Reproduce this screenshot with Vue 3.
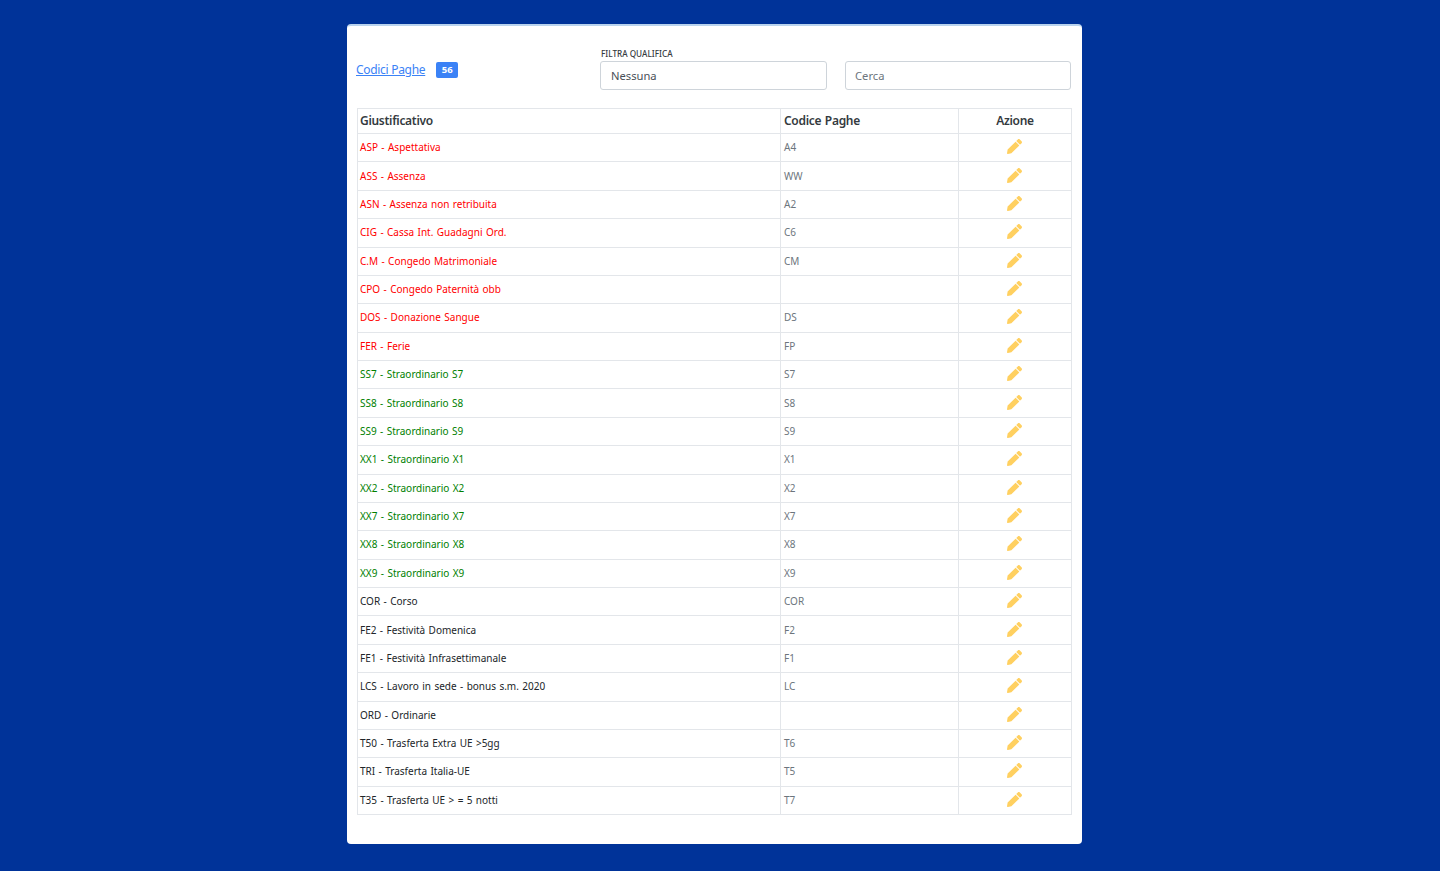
<script setup>
const groups = [
  ['red', [['ASP - Aspettativa','A4'],['ASS - Assenza','WW'],['ASN - Assenza non retribuita','A2'],['CIG - Cassa Int. Guadagni Ord.','C6'],['C.M - Congedo Matrimoniale','CM'],['CPO - Congedo Paternità obb',''],['DOS - Donazione Sangue','DS'],['FER - Ferie','FP']]],
  ['green', [['SS7 - Straordinario S7','S7'],['SS8 - Straordinario S8','S8'],['SS9 - Straordinario S9','S9'],['XX1 - Straordinario X1','X1'],['XX2 - Straordinario X2','X2'],['XX7 - Straordinario X7','X7'],['XX8 - Straordinario X8','X8'],['XX9 - Straordinario X9','X9']]],
  ['dark', [['COR - Corso','COR'],['FE2 - Festività Domenica','F2'],['FE1 - Festività Infrasettimanale','F1'],['LCS - Lavoro in sede - bonus s.m. 2020','LC'],['ORD - Ordinarie',''],['T50 - Trasferta Extra UE >5gg','T6'],['TRI - Trasferta Italia-UE','T5'],['T35 - Trasferta UE > = 5 notti','T7']]],
]
const rows = groups.flatMap(([cls, items]) => items.map(([name, code]) => ({ cls, name, code })))
</script>

<template>
  <div class="page">
    <main class="card">
      <header class="top">
        <div class="title">
          <a href="#" class="link">Codici Paghe</a>
          <span class="badge">56</span>
        </div>
        <label class="filter">
          <span class="lab">FILTRA QUALIFICA</span>
          <span class="control">Nessuna</span>
        </label>
        <div class="search"><span class="control ph">Cerca</span></div>
      </header>
      <table class="tbl">
        <colgroup><col class="c1" /><col class="c2" /><col class="c3" /></colgroup>
        <thead>
          <tr><th>Giustificativo</th><th>Codice Paghe</th><th class="center">Azione</th></tr>
        </thead>
        <tbody>
          <tr v-for="r in rows" :key="r.name">
            <td :class="r.cls">{{ r.name }}</td>
            <td class="code">{{ r.code }}</td>
            <td class="center action">
              <svg class="pen" viewBox="0 0 512 512" aria-hidden="true">
                <path d="M497.9 142.1l-46.1 46.1c-4.700 4.700-12.300 4.700-17 0l-111-111c-4.700-4.700-4.700-12.300 0-17l46.100-46.100c18.700-18.700 49.100-18.700 67.900 0l60.100 60.100c18.800 18.700 18.800 49.100 0 67.900zM284.200 99.800L21.600 362.400.4 483.900c-2.900 16.400 11.400 30.600 27.800 27.800l121.500-21.300 262.600-262.600c4.700-4.700 4.700-12.300 0-17l-111-111c-4.800-4.700-12.400-4.700-17.100 0z" />
              </svg>
            </td>
          </tr>
        </tbody>
      </table>
    </main>
  </div>
</template>

<style scoped>
.page {
  min-height: 871px;
  box-sizing: border-box;
  padding-top: 24px;
  background: #003399;
  font-family: "Noto Sans", "Open Sans", sans-serif;
}
.card {
  box-sizing: border-box;
  width: 735px;
  height: 820px;
  margin-left: 347px;
  padding: 0 10px 0 9px;
  background: #fff;
  border-top: 2px solid #b9d3ee;
  border-radius: 4px;
}
.top {
  display: grid;
  grid-template-columns: 244px 227px 244px;
  height: 82px;
  align-items: start;
}
.title {
  display: flex;
  align-items: center;
  gap: 11px;
  margin-top: 35px;
  height: 17px;
}
.link {
  color: #3b82f6;
  font-size: 12px;
  letter-spacing: -0.300px;
  text-decoration: underline;
}
.badge {
  box-sizing: border-box;
  width: 22px;
  height: 16px;
  border-radius: 2px;
  background: #3b82f6;
  color: #fff;
  font-size: 9.500px;
  font-weight: 700;
  line-height: 16px;
  text-align: center;
}
.filter { display: block; margin-top: 21px; }
.lab {
  display: block;
  height: 14px;
  padding-left: 1px;
  color: #343a40;
  font-size: 8.200px;
  font-weight: 500;
  line-height: 14px;
}
.control {
  display: block;
  box-sizing: border-box;
  height: 29px;
  padding-left: 10px;
  border: 1px solid #ced4da;
  border-radius: 3px;
  color: #495057;
  font-size: 11.200px;
  line-height: 27px;
}
.search { margin-top: 35px; padding-left: 18px; }
.ph { padding-left: 9px; color: #6c757d; line-height: 28px; }
.tbl {
  width: 714px;
  table-layout: fixed;
  border-collapse: collapse;
  margin-left: 1px;
  font-size: 10px;
  word-spacing: 0.800px;
}
.c1 { width: 423px; }
.c2 { width: 178px; }
.c3 { width: 113px; }
th, td {
  box-sizing: border-box;
  padding: 0 3px;
  border: 1px solid #e3e6ea;
  text-align: left;
  white-space: nowrap;
}
th:first-child, td:first-child { padding-left: 2px; }
th {
  height: 25px;
  padding-bottom: 1px;
  color: #343a40;
  font-size: 12px;
  font-weight: 600;
  letter-spacing: -0.300px;
}
td { height: 28.375px; padding-bottom: 1px; }
th.center, td.center { text-align: center; }
td.action { padding-right: 5px; }
.red { color: #ff0000; }
.green { color: #008000; }
.dark { color: #212529; }
.code { color: #6c757d; }
.pen {
  display: block;
  width: 15px;
  height: 15px;
  margin: -1px auto 0;
  fill: #ffd060;
}
</style>

<style>
html, body { margin: 0; background: #003399; }
</style>
